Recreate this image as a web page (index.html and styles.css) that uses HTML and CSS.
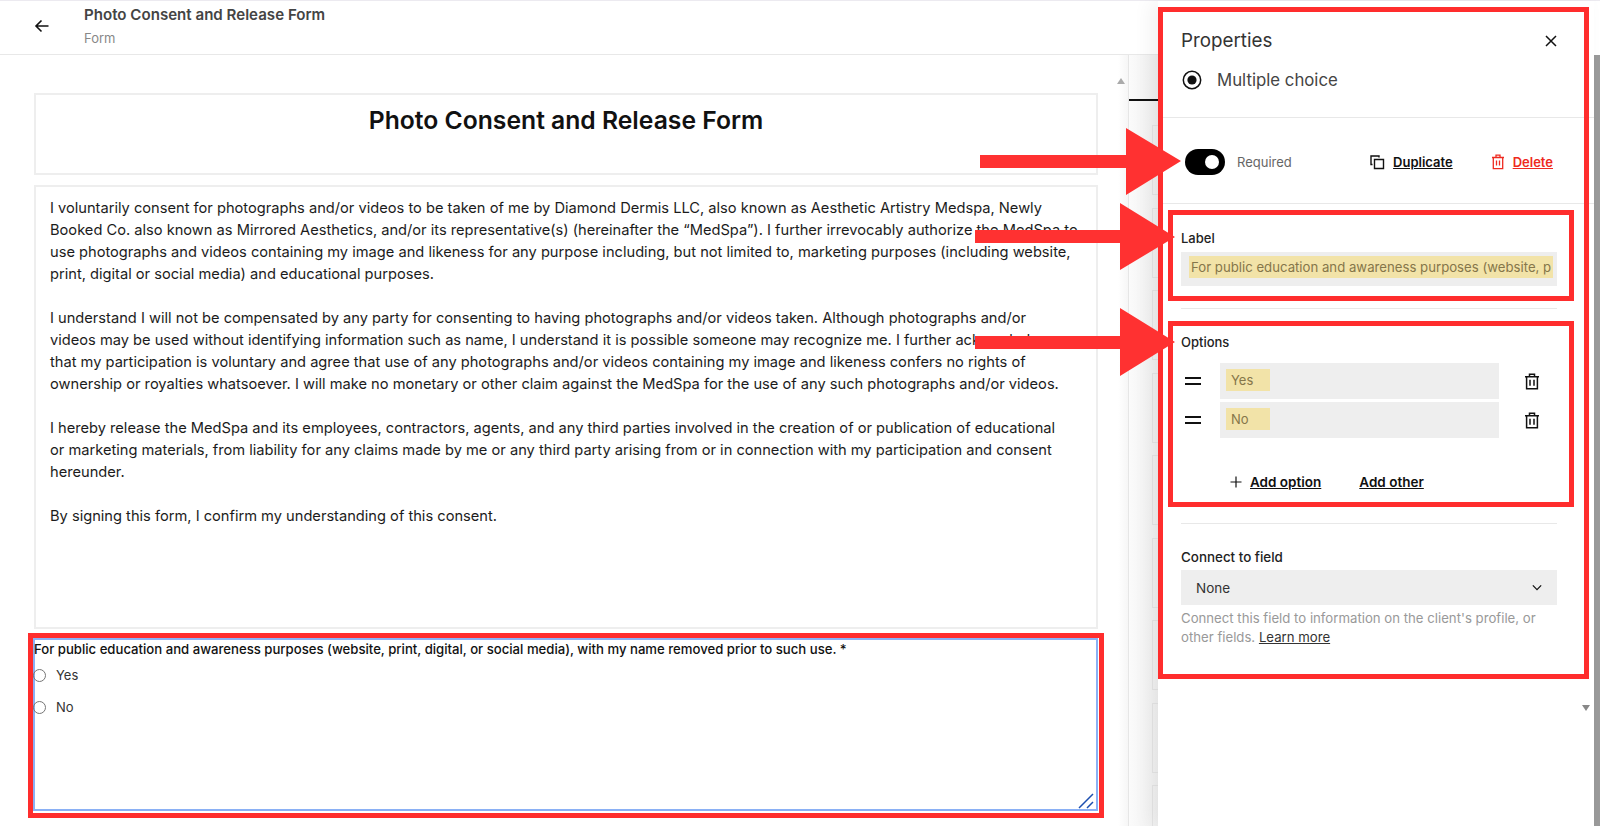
FILE: index.html
```html
<!DOCTYPE html>
<html lang="en">
<head>
<meta charset="utf-8">
<title>Photo Consent and Release Form</title>
<link rel="stylesheet" href="styles.css">
</head>
<body>
<div class="app">
  <div class="left">
    <header class="topbar">
      <svg class="back" viewBox="0 0 16 16" width="16" height="16"><path d="M14.5 8H2M7.5 2.5 2 8l5.5 5.5" fill="none" stroke="#111" stroke-width="1.6"/></svg>
      <div class="crumbs">
        <div class="crumb-title">Photo Consent and Release Form</div>
        <div class="crumb-sub">Form</div>
      </div>
    </header>
    <div class="body-row">
      <main class="form-area">
        <div class="form-title"><h1>Photo Consent and Release Form</h1></div>
        <div class="form-copy">
          <p>I voluntarily consent for photographs and/or videos to be taken of me by Diamond Dermis LLC, also known as Aesthetic Artistry Medspa, Newly<br>Booked Co. also known as Mirrored Aesthetics, and/or its representative(s) (hereinafter the “MedSpa”). I further irrevocably authorize the MedSpa to<br>use photographs and videos containing my image and likeness for any purpose including, but not limited to, marketing purposes (including website,<br>print, digital or social media) and educational purposes.</p>
          <p>I understand I will not be compensated by any party for consenting to having photographs and/or videos taken. Although photographs and/or<br>videos may be used without identifying information such as name, I understand it is possible someone may recognize me. I further acknowledge<br>that my participation is voluntary and agree that use of any photographs and/or videos containing my image and likeness confers no rights of<br>ownership or royalties whatsoever. I will make no monetary or other claim against the MedSpa for the use of any such photographs and/or videos.</p>
          <p>I hereby release the MedSpa and its employees, contractors, agents, and any third parties involved in the creation of or publication of educational<br>or marketing materials, from liability for any claims made by me or any third party arising from or in connection with my participation and consent<br>hereunder.</p>
          <p>By signing this form, I confirm my understanding of this consent.</p>
        </div>
        <div class="field">
          <div class="question">For public education and awareness purposes (website, print, digital, or social media), with my name removed prior to such use. *</div>
          <div class="choice"><span class="radio"></span>Yes</div>
          <div class="choice"><span class="radio"></span>No</div>
          <svg class="resize" viewBox="0 0 16 16" width="16" height="16"><path d="M1 15 15 1M9 15l6-6" stroke="#1d4fb0" stroke-width="1.5" fill="none"/></svg>
        </div>
      </main>
      <div class="gutter"><span class="arrow-up"></span></div>
      <aside class="tabs">
        <div class="tab-rule"></div>
        <div class="tab-card"></div><div class="tab-card"></div><div class="tab-card"></div>
        <div class="tab-card"></div><div class="tab-card"></div><div class="tab-card"></div>
        <div class="tab-card"></div><div class="tab-card"></div><div class="tab-card"></div>
      </aside>
    </div>
  </div>

  <section class="panel">
    <div class="panel-top">
      <div class="panel-head">
        <h2>Properties</h2>
        <svg viewBox="0 0 14 14" width="14" height="14"><path d="M2 2l10 10M12 2 2 12" stroke="#111" stroke-width="1.5"/></svg>
      </div>
      <div class="type-row">
        <svg viewBox="0 0 20 20" width="20" height="20"><circle cx="10" cy="10" r="8.7" fill="none" stroke="#111" stroke-width="1.5"/><circle cx="10" cy="10" r="4.6" fill="#111"/></svg>
        <span>Multiple choice</span>
      </div>
    </div>
    <div class="action-row">
      <span class="toggle"><span class="knob"></span></span>
      <span class="req">Required</span>
      <span class="act dup">
        <svg viewBox="0 0 16 16" width="16" height="16"><path d="M5.5 5.5h9v9h-9z M3.5 10.5H2V2h8v1.5" fill="none" stroke="#111" stroke-width="1.4"/></svg>
        <a>Duplicate</a>
      </span>
      <span class="act del">
        <svg viewBox="0 0 14 16" width="14" height="16"><path d="M1 3.5h12M5 3.5V1.2h4v2.3M2.3 3.5v11.2h9.4V3.5M5.5 6.5v5M8.5 6.5v5" fill="none" stroke="#ee2a20" stroke-width="1.3"/></svg>
        <a>Delete</a>
      </span>
    </div>
    <div class="sect-label">
      <label>Label</label>
      <div class="input label-input"><span class="mark">For public education and awareness purposes (website, p</span></div>
    </div>
    <div class="sect-options">
      <label>Options</label>
      <div class="opt-row">
        <span class="handle"></span>
        <div class="input opt-input"><span class="mark">Yes</span></div>
        <svg class="opt-trash" viewBox="0 0 16 17" width="16" height="17"><path d="M1 3.8h14M5.5 3.8V1.2h5v2.6M2.6 3.8v11.9h10.8V3.8M6 6.8v6M10 6.8v6" fill="none" stroke="#111" stroke-width="1.5"/></svg>
      </div>
      <div class="opt-row">
        <span class="handle"></span>
        <div class="input opt-input"><span class="mark">No</span></div>
        <svg class="opt-trash" viewBox="0 0 16 17" width="16" height="17"><path d="M1 3.8h14M5.5 3.8V1.2h5v2.6M2.6 3.8v11.9h10.8V3.8M6 6.8v6M10 6.8v6" fill="none" stroke="#111" stroke-width="1.5"/></svg>
      </div>
      <div class="add-row">
        <svg viewBox="0 0 12 12" width="12" height="12"><path d="M6 .5v11M.5 6h11" stroke="#111" stroke-width="1.2"/></svg>
        <a class="add-option">Add option</a>
        <a>Add other</a>
      </div>
    </div>
    <div class="sect-connect">
      <label>Connect to field</label>
      <div class="select">None
        <svg viewBox="0 0 12 8" width="10" height="7"><path d="M1 1.5 6 6.5l5-5" fill="none" stroke="#111" stroke-width="1.5"/></svg>
      </div>
      <p class="help">Connect this field to information on the client's profile, or<br>other fields. <a>Learn more</a></p>
    </div>
    <span class="arrow-down"></span>
  </section>

  <div class="scrollbar"><span class="thumb"></span></div>
</div>

<div class="frame frame-panel"></div>
<div class="frame frame-label"></div>
<div class="frame frame-options"></div>
<div class="frame frame-field"></div>
<svg class="arrows" viewBox="0 0 1600 826" width="1600" height="826">
  <polygon points="980,155 1126,155 1126,128 1181,161 1126,195 1126,168 980,168"/>
  <polygon points="975,230 1120,230 1120,203 1175,237 1120,270 1120,243 975,243"/>
  <polygon points="975,336 1120,336 1120,308 1175,342 1120,376 1120,349 975,349"/>
</svg>
</body>
</html>
```
FILE: styles.css
```css
* { box-sizing: border-box; }
html, body { margin: 0; height: 826px; overflow: hidden; background: #fff; }
body { font-family: Inter, "Liberation Sans", sans-serif; color: #111; position: relative; }
h1, h2, p { margin: 0; }

.app { display: flex; height: 826px; border-top: 1px solid #eceaf0; }
.left { width: 1158px; display: flex; flex-direction: column; flex: none; }

.topbar { height: 54px; flex: none; display: flex; border-bottom: 1px solid #e8e8e8; padding-left: 34px; }
.back { margin-top: 17px; }
.crumbs { margin-left: 34px; padding-top: 5px; }
.crumb-title { font-size: 15.1px; line-height: 18px; font-weight: 600; color: #444; }
.crumb-sub { font-size: 13px; line-height: 18px; margin-top: 5px; color: #888; }

.body-row { flex: 1; display: flex; min-height: 0; }
.form-area { width: 1118px; padding: 38px 0 0 33px; flex: none; }
.form-title { width: 1064px; margin-left: 1px; height: 82px; border: 2px solid #eee; text-align: center; padding-top: 9px; }
.form-title h1 { font-size: 24.7px; line-height: 32px; font-weight: 600; color: #111; }
.form-copy { width: 1064px; margin: 10px 0 0 1px; height: 444px; border: 2px solid #eee; padding: 10px 14px; font-size: 14.65px; line-height: 22px; color: #1c1c1c; }
.form-copy p { margin-bottom: 22px; }
.field { position: relative; width: 1065px; height: 173px; margin-top: 9px; border: 2px solid #8ab0f5; }
.question { font-size: 13.15px; line-height: 18px; font-weight: 500; color: #111; margin-left: -1px; }
.choice { display: flex; align-items: center; font-size: 13px; line-height: 18px; height: 18px; margin-top: 8px; margin-bottom: 14px; color: #333; }
.radio { width: 13px; height: 13px; border: 1.3px solid #767676; border-radius: 50%; margin-right: 10px; margin-left: -2px; }
.resize { position: absolute; right: 2px; bottom: 0; }

.gutter { width: 10px; flex: none; padding-top: 23px; background: linear-gradient(90deg, #fff, #f6f6f6); position: relative; }
.arrow-up { position: absolute; left: -1px; top: 23px; border: 4px solid transparent; border-top: 0; border-bottom: 6px solid #aaa; }
.tabs { flex: 1; border-left: 1px solid #e6e6e6; padding-top: 45px; padding-left: 23px; background: linear-gradient(90deg, #fbfbfb, #efefef); position: relative; overflow: hidden; }
.tab-rule { position: absolute; left: 0; right: 0; top: 44px; height: 2px; background: #111; }
.tab-card { height: 70px; margin: 25px 0 -12.5px; border: 1px solid #e4e4e4; border-right: 0; }

.panel { width: 436px; flex: none; background: #fff; box-shadow: -8px 0 18px rgba(0,0,0,.05); position: relative; }
.panel label { display: block; font-size: 13px; line-height: 16px; font-weight: 500; color: #222; }
.panel-top { height: 117px; border-bottom: 1px solid #e8e8e8; padding: 26px 37px 0 23px; }
.panel-head { display: flex; justify-content: space-between; align-items: center; height: 28px; }
.panel-head svg { margin-right: -1px; }
.panel-head h2 { font-size: 18.8px; font-weight: 400; color: #333; line-height: 28px; }
.type-row { display: flex; align-items: center; height: 26px; margin-top: 12px; font-size: 16.8px; color: #444; }
.type-row svg { margin-right: 15px; flex: none; margin-left: 1px; }

.action-row { height: 86px; border-bottom: 1px solid #e8e8e8; padding: 3px 41px 0 27px; display: flex; align-items: center; font-size: 13px; }
.toggle { width: 40px; height: 26px; border-radius: 13px; background: #000; position: relative; flex: none; }
.knob { position: absolute; right: 6px; top: 6px; width: 14px; height: 14px; background: #fff; border-radius: 50%; }
.req { margin-left: 12px; color: #666; flex: 1; }
.act { display: flex; align-items: center; gap: 8px; font-weight: 600; }
.act a { text-decoration: underline; }
.dup { margin-right: 38px; }
.del { color: #ee2a20; }

.sect-label { margin: 0 37px 0 23px; height: 105px; padding-top: 26px; border-bottom: 1px solid #e8e8e8; }
.input { background: #eee; }
.label-input { margin-top: 6px; height: 34px; padding: 4px 4px 0 8px; }
.mark { display: block; background: #f2e3a8; color: #85764a; font-size: 13.2px; line-height: 22px; padding-left: 2px; overflow: hidden; white-space: nowrap; }

.sect-options { margin: 0 37px 0 23px; height: 215px; padding-top: 25px; border-bottom: 1px solid #e8e8e8; }
.opt-row { display: flex; align-items: center; height: 36px; margin-bottom: 3px; }
.opt-row:first-of-type { margin-top: 13px; }
.handle { width: 16px; height: 8px; margin: 0 19px 0 4px; border-top: 2.5px solid #111; border-bottom: 2.5px solid #111; flex: none; }
.opt-input { width: 279px; height: 100%; padding: 6px 0 0 6px; }
.opt-input .mark { width: 44px; font-size: 13px; padding-left: 5px; line-height: 22px; }
.opt-trash { margin-left: 25px; }
.add-row { display: flex; align-items: center; margin-top: 36px; padding-left: 49px; font-size: 13.5px; font-weight: 600; }
.add-row a { text-decoration: underline; }
.add-option { margin: 0 38px 0 8px; }

.sect-connect { margin: 0 37px 0 23px; padding-top: 25px; }
.sect-connect label { font-size: 13.4px; }
.select { margin-top: 5px; height: 35px; background: #eee; display: flex; align-items: center; justify-content: space-between; padding: 0 15px; font-size: 13.5px; color: #333; }
.help { margin-top: 4px; font-size: 13.2px; line-height: 18.5px; color: #999; }
.help a { color: #333; text-decoration: underline; }
.arrow-down { position: absolute; left: 424px; top: 704px; border: 4px solid transparent; border-bottom: 0; border-top: 6px solid #888; }

.scrollbar { width: 6px; flex: none; padding-top: 54px; background: #fff; display: flex; flex-direction: column; }
.thumb { display: block; flex: 1; background: #9a9a9a; }

.frame { position: absolute; border: 5px solid #ff2d2d; pointer-events: none; }
.frame-panel { left: 1158px; top: 7px; width: 431px; height: 672px; }
.frame-label { left: 1168px; top: 210px; width: 406px; height: 91px; }
.frame-options { left: 1168px; top: 321px; width: 406px; height: 186px; }
.frame-field { left: 28px; top: 633px; width: 1076px; height: 185px; }
.arrows { position: absolute; left: 0; top: 0; fill: #ff3131; pointer-events: none; }
```
